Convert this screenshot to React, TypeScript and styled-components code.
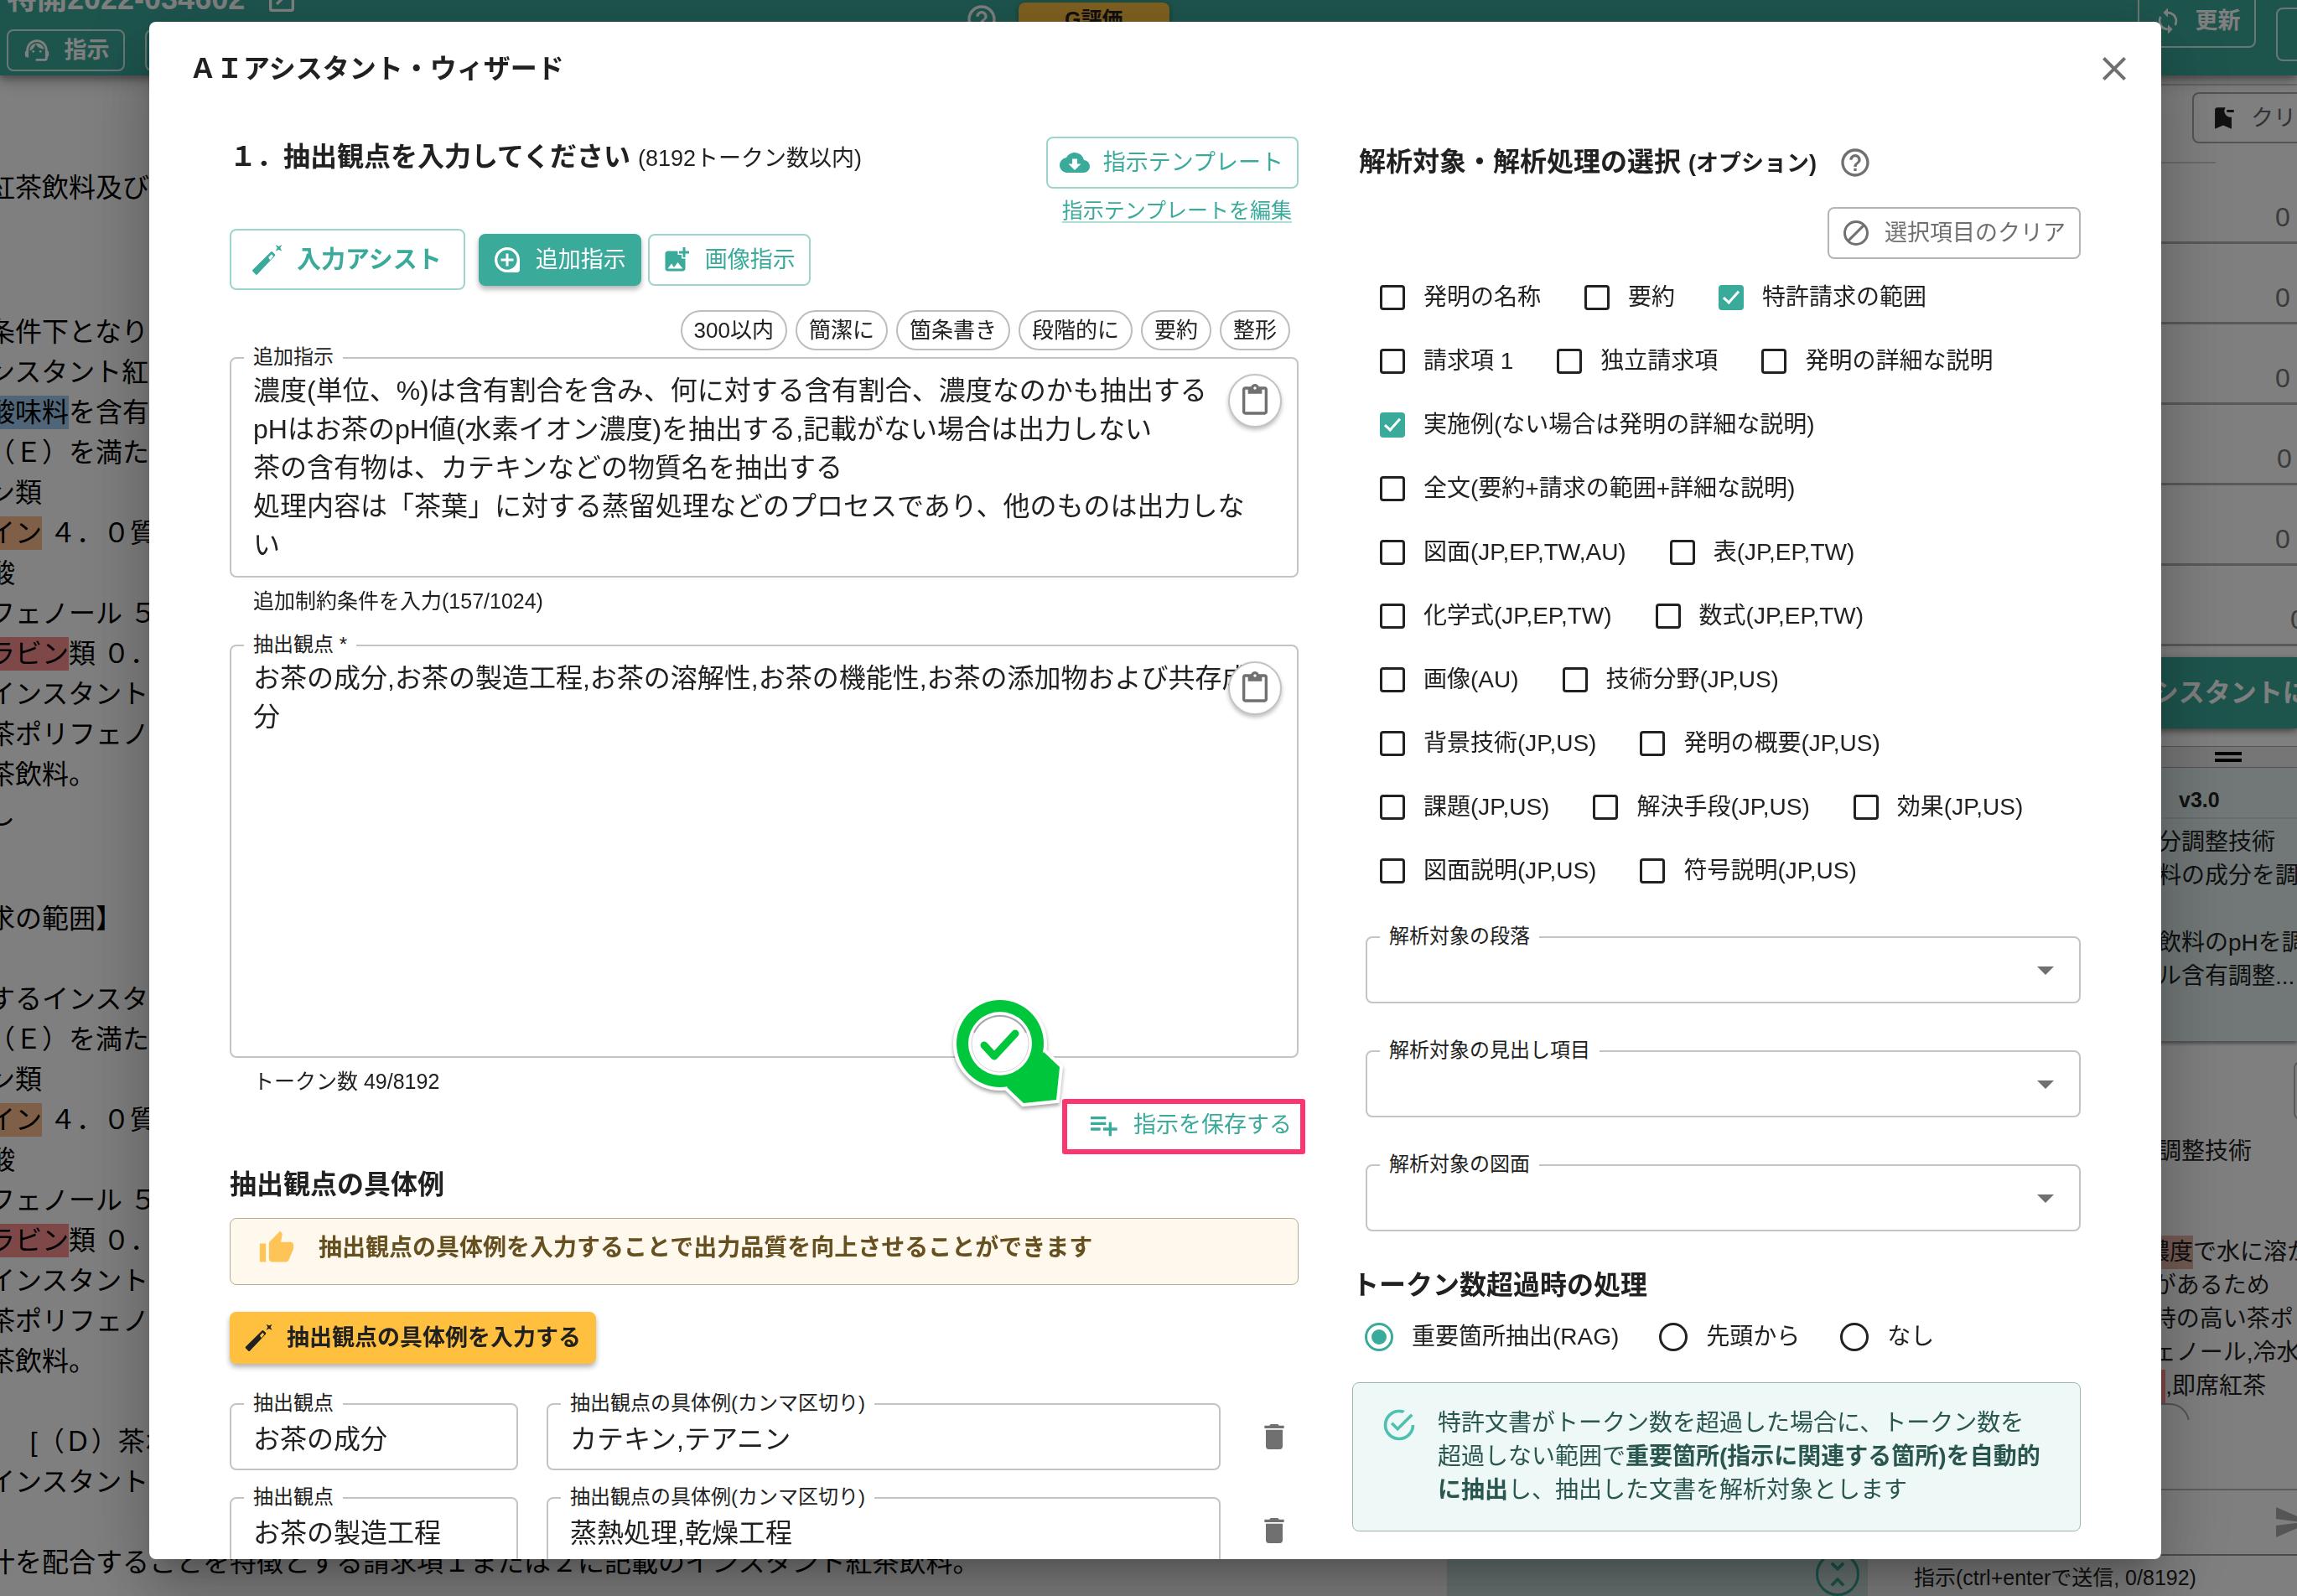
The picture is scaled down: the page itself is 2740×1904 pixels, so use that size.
import React, { useState } from 'react';
import styled, { createGlobalStyle, css } from 'styled-components';
import {
  MdAddPhotoAlternate,
  MdArrowDropDown,
  MdBookmarkRemove,
  MdClose,
  MdCloudDownload,
  MdContentPaste,
  MdDelete,
  MdHelpOutline,
  MdOpenInNew,
  MdPlaylistAdd,
  MdSend,
  MdSupportAgent,
  MdSync,
  MdThumbUp,
  MdUnfoldLess,
} from 'react-icons/md';

const teal = '#3aaa9b';
const amber = '#ffc040';
const ink = '#212121';
const line = '#c4c4c4';

const GlobalStyle = createGlobalStyle`
  *, *::before, *::after { box-sizing: border-box; }
  body {
    margin: 0;
    background: #fff;
    color: ${ink};
    font-family: "Liberation Sans", "Noto Sans CJK JP", sans-serif;
    font-size: 28px;
    line-height: 40px;
    text-spacing-trim: space-all;
  }
  button, input, textarea, select { font: inherit; color: inherit; }
  button { cursor: pointer; }
  h1, h2, p { margin: 0; }
  svg { display: block; flex: none; }
`;

/* ---------- page behind the dialog ---------- */

const Page = styled.div`
  height: 100vh;
  display: flex;
  flex-direction: column;
  overflow: hidden;
`;

const AppBar = styled.header`
  flex: none;
  display: flex;
  height: 90px;
  overflow: hidden;
  background: ${teal};
  color: #fff;
  position: relative;
  box-shadow: 0 4px 8px rgba(0, 0, 0, 0.3), 0 8px 20px rgba(0, 0, 0, 0.2);
`;

const BarLeft = styled.div`
  flex: 0 0 42%;
  display: flex;
  flex-direction: column;
  justify-content: flex-end;
  gap: 16px;
  padding: 0 8px 5px;
`;

const BarRow = styled.div`
  display: flex;
  align-items: center;
  gap: 24px;
`;

const DocNumber = styled.span`
  font-size: 36px;
  font-weight: 700;
`;

const BarButton = styled.button<{ $tall?: boolean }>`
  flex: none;
  display: flex;
  align-items: center;
  justify-content: center;
  gap: 16px;
  min-width: 141px;
  height: ${(p) => (p.$tall ? 64 : 50)}px;
  padding: 0 16px;
  border: 2px solid rgba(255, 255, 255, 0.8);
  border-radius: 8px;
  background: none;
  color: #fff;
  font-size: 27px;
  font-weight: 700;
  white-space: nowrap;
`;

const BarMiddle = styled.div`
  flex: 1;
  min-width: 0;
  display: flex;
  align-items: flex-start;
  gap: 24px;
  padding-top: 3px;
`;

const RatingButton = styled.button`
  width: 180px;
  height: 40px;
  padding: 0;
  border: 0;
  border-radius: 8px;
  background: ${amber};
  color: ${ink};
  font-size: 25px;
  line-height: 36px;
  font-weight: 700;
  box-shadow: 0 2px 6px rgba(0, 0, 0, 0.4);
`;

const BarRight = styled.div`
  flex: none;
  width: 190px;
  display: flex;
  align-items: flex-end;
  gap: 24px;
  padding-bottom: 17px;
`;

const BarLift = styled.div`
  flex: none;
  padding-bottom: 16px;
`;

const Workspace = styled.div`
  flex: 1;
  min-height: 0;
  display: flex;
`;

const Document = styled.article`
  flex: 1;
  min-width: 0;
  margin-left: -14px;
  padding-top: 110px;
  color: #000;
  font-size: 32px;
  line-height: 48px;
  white-space: pre;
`;

const Paragraph = styled.p`
  min-height: 48px;
  margin-bottom: 28px;
`;

const Mark = styled.mark<{ $tone: string }>`
  display: inline-block;
  height: 40px;
  line-height: 40px;
  color: inherit;
  background: ${(p) => p.$tone};
`;

const MiddlePane = styled.div`
  flex: 0 0 502px;
  display: flex;
  align-items: flex-end;
  justify-content: flex-end;
  padding: 0 10px 0 0;
  background: #d2e8e5;
`;

const RoundToggle = styled.button`
  display: grid;
  place-items: center;
  width: 52px;
  height: 52px;
  padding: 0;
  border: 3px solid ${teal};
  border-radius: 50%;
  background: none;
  color: ${teal};
`;

const SidePane = styled.aside`
  flex: 0 0 502px;
  display: flex;
  flex-direction: column;
  margin-left: 10px;
  padding-top: 10px;
  white-space: nowrap;
  overflow: hidden;
`;

const SideTools = styled.div`
  height: 95px;
  padding: 8px 0 0 377px;
  border-top: 2px solid #d0d0d0;
  background: linear-gradient(#d4d4d4, #d4d4d4) left bottom / 405px 2px no-repeat;
`;

const SideButton = styled.button`
  display: flex;
  align-items: center;
  gap: 16px;
  height: 61px;
  padding: 0 18px;
  border: 2px solid #a8a8a8;
  border-radius: 8px;
  background: none;
  color: #666;
  font-size: 27px;
  svg { color: ${ink}; }
`;

const CountRow = styled.div<{ $indent?: number }>`
  height: 96px;
  padding: 44px 0 0 ${(p) => 476 + (p.$indent ?? 0)}px;
  border-bottom: 3px solid #b4b4b4;
  color: #777;
  font-size: 32px;
`;

const AssistantBar = styled.button`
  height: 85px;
  margin: 13px 0 21px;
  padding: 0 0 0 300px;
  border: 0;
  background: ${teal};
  color: #fff;
  font-size: 31px;
  font-weight: 700;
  text-align: left;
  box-shadow: 0 3px 8px rgba(0, 0, 0, 0.5);
`;

const Splitter = styled.div`
  display: flex;
  flex-direction: column;
  justify-content: center;
  gap: 4px;
  height: 26px;
  padding-left: 404px;
  border-top: 1px solid #aaa;
  border-bottom: 1px solid #aaa;
  background: #ececec;
`;

const Grip = styled.span`
  width: 32px;
  height: 4px;
  background: #000;
`;

const AnswerCard = styled.section`
  height: 326px;
  background: #e2f1ef;
  box-shadow: 0 3px 4px rgba(0, 0, 0, 0.4);
`;

const Version = styled.div`
  height: 61px;
  padding: 18px 0 0 361px;
  border-bottom: 2px solid #cddedb;
  font-size: 25px;
  font-weight: 700;
`;

const SideLines = styled.div`
  padding: 8px 0 0 336px;
  white-space: pre;
`;

const SideNotesHead = styled.div`
  height: 112px;
  padding: 24px 0 0 498px;
`;

const SideMenuButton = styled.button`
  width: 72px;
  height: 70px;
  border: 2px solid #b4b4b4;
  border-radius: 8px;
  background: none;
`;

const SideNotes = styled.div`
  padding-left: 336px;
`;

const SideNotesLower = styled.div`
  padding: 80px 0 0 322px;
  white-space: pre;
`;

const SideTagClip = styled.div`
  height: 20px;
  padding-left: 300px;
  overflow: hidden;
`;

const SideTag = styled.button`
  width: 74px;
  height: 48px;
  border: 2px solid #a8a8a8;
  border-radius: 24px;
  background: none;
`;

const Composer = styled.div`
  margin-top: auto;
`;

const ComposerRow = styled.div`
  display: flex;
  align-items: center;
  height: 80px;
  padding-left: 473px;
  border-top: 2px solid #bbb;
  border-bottom: 2px solid #999;
  color: #aaa;
`;

const ComposerHint = styled.p`
  height: 48px;
  padding: 6px 0 0 45px;
  font-size: 25px;
`;

/* ---------- dialog ---------- */

const Backdrop = styled.div`
  position: fixed;
  inset: 0;
  display: flex;
  padding: 26px 162px 44px 178px;
  background: rgba(0, 0, 0, 0.5);
`;

const Dialog = styled.div`
  flex: 1;
  min-width: 0;
  display: flex;
  flex-direction: column;
  overflow: hidden;
  border-radius: 8px;
  background: #fff;
  box-shadow: 0 22px 30px -14px rgba(0, 0, 0, 0.2), 0 48px 76px 6px rgba(0, 0, 0, 0.14),
    0 18px 92px 16px rgba(0, 0, 0, 0.12);
`;

const DialogHead = styled.div`
  flex: none;
  display: flex;
  align-items: center;
  justify-content: space-between;
  height: 112px;
  padding: 0 32px 0 48px;
`;

const DialogTitle = styled.h1`
  font-size: 32px;
  line-height: 48px;
`;

const PlainIconButton = styled.button`
  display: grid;
  place-items: center;
  padding: 0;
  border: 0;
  background: none;
  color: #707070;
`;

const DialogBody = styled.div`
  flex: 1;
  min-height: 0;
  display: grid;
  grid-template-columns: minmax(0, 1275fr) minmax(0, 869fr);
  column-gap: 64px;
  padding: 25px 96px 0;
  overflow: auto;
  scrollbar-width: none;
`;

const Column = styled.div`
  min-width: 0;
`;

const SectionHead = styled.div`
  display: flex;
  justify-content: space-between;
  align-items: flex-start;
`;

const Heading = styled.h2<{ $spaced?: boolean }>`
  margin-top: ${(p) => (p.$spaced ? 12 : 0)}px;
  font-size: 32px;
  line-height: 48px;
  small { font-size: 27px; }
`;

const Light = styled.small`
  font-weight: 400;
`;

const TemplateBox = styled.div`
  display: flex;
  flex-direction: column;
  align-items: flex-end;
  gap: 8px;
`;

const TemplateLink = styled.a`
  margin-right: 8px;
  color: ${teal};
  font-size: 25px;
  line-height: 36px;
  text-decoration-color: rgba(58, 170, 155, 0.4);
  text-decoration-thickness: 2px;
  text-underline-offset: 4px;
`;

type Tone = 'outline' | 'solid' | 'amber' | 'grey' | 'text';

const tones = {
  outline: css`border-color: #9dd4cd; background: #fff; color: ${teal};`,
  solid: css`border-color: ${teal}; background: ${teal}; color: #fff; box-shadow: 0 4px 6px rgba(0, 0, 0, 0.3);`,
  amber: css`border-color: ${amber}; background: ${amber}; color: ${ink}; box-shadow: 0 4px 6px rgba(0, 0, 0, 0.3);`,
  grey: css`border-color: #b4b4b4; background: #fff; color: #707070;`,
  text: css`border-color: transparent; background: none; color: ${teal};`,
};

const Button = styled.button<{ $tone: Tone; $large?: boolean; $strong?: boolean }>`
  display: inline-flex;
  align-items: center;
  justify-content: center;
  gap: 16px;
  height: ${(p) => (p.$large ? 73 : 62)}px;
  padding: ${(p) => (p.$large ? '0 26px 0 22px' : '0 16px 0 14px')};
  border: 2px solid;
  border-radius: 8px;
  font-size: ${(p) => (p.$large ? 29 : 27)}px;
  font-weight: ${(p) => (p.$strong ? 700 : 400)};
  white-space: nowrap;
  ${(p) => tones[p.$tone]}
`;

const ActionRow = styled.div`
  display: flex;
  align-items: center;
  gap: 8px;
  margin-top: 4px;
  & > :first-child { margin-right: 8px; }
`;

const ChipRow = styled.div`
  display: flex;
  justify-content: flex-end;
  gap: 10px;
  margin: 24px 10px 8px 0;
`;

const Chip = styled.button`
  height: 48px;
  padding: 0 14px;
  border: 2px solid #bdbdbd;
  border-radius: 24px;
  background: #fff;
  font-size: 26px;
  line-height: 40px;
`;

const Field = styled.div`
  position: relative;
`;

const FieldLabel = styled.label`
  position: absolute;
  top: -16px;
  left: 17px;
  padding: 0 11px;
  background: #fff;
  font-size: 24px;
  line-height: 32px;
`;

const controlBox = css`
  display: block;
  width: 100%;
  margin: 0;
  border: 2px solid ${line};
  border-radius: 8px;
  background: #fff;
  font-size: 32px;
  outline: 0;
`;

const TextArea = styled.textarea`
  ${controlBox}
  padding: 15px 40px 14px 26px;
  line-height: 46px;
  resize: none;
  overflow: hidden;
`;

const TextInput = styled.input`
  ${controlBox}
  height: 80px;
  padding: 0 26px;
`;

const Select = styled.select`
  ${controlBox}
  height: 80px;
  padding: 0 72px 0 26px;
  appearance: none;
`;

const SelectArrow = styled(MdArrowDropDown)`
  position: absolute;
  top: 16px;
  right: 18px;
  color: #707070;
  pointer-events: none;
`;

const PasteButton = styled.button`
  position: absolute;
  top: 20px;
  right: 20px;
  display: grid;
  place-items: center;
  width: 64px;
  height: 64px;
  padding: 0;
  border: 2px solid ${line};
  border-radius: 50%;
  background: #fff;
  color: #707070;
  box-shadow: 0 3px 5px rgba(0, 0, 0, 0.25);
`;

const Helper = styled.p<{ $last?: boolean }>`
  margin: 11px 0 ${(p) => (p.$last ? 4 : 35)}px;
  padding-left: 28px;
  font-size: 25px;
  line-height: 34px;
`;

const SaveRow = styled.div`
  display: flex;
  justify-content: flex-end;
  margin-right: -8px;
`;

const Callout = styled.div`
  position: relative;
  border: 6px solid #fb3570;
  border-radius: 3px;
  width: 290px;
  height: 66px;
  padding-bottom: 4px;
  display: flex;
  align-items: center;
  justify-content: flex-end;
  & > button { padding: 0 8px; }
`;

const Pin = styled.svg`
  position: absolute;
  right: 280px;
  bottom: 50px;
  filter: drop-shadow(0 3px 2px rgba(0, 0, 0, 0.35));
`;

const Notice = styled.div<{ $kind: 'tip' | 'info' }>`
  display: flex;
  border: 1px solid;
  border-radius: 8px;
  ${(p) =>
    p.$kind === 'tip'
      ? css`
          align-items: center;
          gap: 28px;
          height: 80px;
          margin: 16px 0 32px;
          padding: 0 32px 8px 33px;
          border-color: #b8ab93;
          background: #fff8ed;
          color: #66501f;
          font-weight: 700;
          svg { color: #ffc457; }
        `
      : css`
          gap: 24px;
          margin-top: 16px;
          padding: 28px 40px 28px 33px;
          border-color: #9fb5b1;
          background: #eef8f7;
          color: #2a5650;
          svg { color: #4fbfb0; }
        `}
`;

const ExampleList = styled.div`
  display: grid;
  gap: 32px;
  margin-top: 47px;
`;

const ExampleRow = styled.div`
  display: grid;
  grid-template-columns: minmax(0, 344fr) minmax(0, 804fr) 59px;
  column-gap: 34px;
  align-items: center;
`;

const HelpHeading = styled.div`
  display: flex;
  align-items: center;
  gap: 26px;
  padding: 6px 0 0 8px;
`;

const ClearRow = styled.div`
  display: flex;
  justify-content: flex-end;
  margin: 28px 0 8px;
`;

const OptionRow = styled.div`
  display: flex;
  align-items: center;
  gap: 52px;
  height: 76px;
  padding-left: 33px;
`;

const RadioRow = styled(OptionRow)`
  gap: 48px;
  padding-left: 15px;
`;

const OptionLabel = styled.label`
  display: flex;
  align-items: center;
  gap: 22px;
  white-space: nowrap;
`;

const Checkbox = styled.input`
  appearance: none;
  display: grid;
  place-items: center;
  width: 30px;
  height: 30px;
  margin: 0;
  border: 3px solid ${ink};
  border-radius: 4px;
  &:checked {
    border-color: ${teal};
    background: ${teal};
  }
  &:checked::after {
    content: '';
    width: 10px;
    height: 19px;
    margin-top: -6px;
    border: solid #fff;
    border-width: 0 3px 3px 0;
    transform: rotate(42deg);
  }
`;

const Radio = styled.input`
  appearance: none;
  display: grid;
  place-items: center;
  width: 34px;
  height: 34px;
  margin: 0;
  border: 3px solid ${ink};
  border-radius: 50%;
  &:checked { border-color: ${teal}; }
  &:checked::after {
    content: '';
    width: 18px;
    height: 18px;
    border-radius: 50%;
    background: ${teal};
  }
`;

const SelectStack = styled.div`
  display: grid;
  gap: 56px;
  margin: 40px 0;
  padding-left: 16px;
`;

/* ---------- icons ---------- */

const WandIcon = ({ size }: { size: number }) => (
  <svg width={size} height={size} viewBox="0 0 24 24" fill="currentColor" aria-hidden="true">
    <path
      fillRule="evenodd"
      d="M16.3 6.3l1.6 1.6a.9.9 0 0 1 0 1.3L5.4 22.3a.9.9 0 0 1-1.3 0l-2-2a.9.9 0 0 1 0-1.3L15 6.3a.9.9 0 0 1 1.3 0zM15.6 7.9l-2.3 2.3 1.2 2 2.3-2.8z"
    />
    <path d="M18.4 1.2l2.3 1.2 2.3-1.2-1.2 2.3L23 5.8l-2.3-1.2-2.3 1.2 1.2-2.3z" />
  </svg>
);

const AddNoteIcon = () => (
  <svg width="36" height="36" viewBox="0 0 24 24" fill="currentColor" aria-hidden="true">
    <path
      fillRule="evenodd"
      d="M12 2C6.48 2 2 6.48 2 12s4.48 10 10 10h8c1.1 0 2-.9 2-2v-8c0-5.52-4.48-10-10-10zm0 2.2a7.8 7.8 0 1 1 0 15.6 7.8 7.8 0 0 1 0-15.6zM11 7v4H7v2h4v4h2v-4h4v-2h-4V7z"
    />
  </svg>
);

const ClearIcon = () => (
  <svg width="36" height="36" viewBox="0 0 24 24" fill="none" stroke="currentColor" strokeWidth="2" aria-hidden="true">
    <circle cx="12" cy="12" r="9" />
    <path d="M5.6 18.4L18.4 5.6" />
  </svg>
);

const SuccessIcon = () => (
  <svg width="44" height="44" viewBox="0 0 24 24" fill="currentColor" aria-hidden="true">
    <path d="M20,12A8,8 0 0,1 12,20A8,8 0 0,1 4,12A8,8 0 0,1 12,4C12.76,4 13.5,4.11 14.2,4.31L15.77,2.74C14.61,2.26 13.34,2 12,2A10,10 0 0,0 2,12A10,10 0 0,0 12,22A10,10 0 0,0 22,12M7.91,10.08L6.5,11.5L11,16L21,6L19.59,4.58L11,13.17L7.91,10.08Z" />
  </svg>
);

const CheckPin = () => (
  <Pin width="136" height="132" viewBox="0 0 136 132" aria-hidden="true">
    <g stroke="#fff" strokeWidth="8" strokeLinejoin="miter" fill="#fff">
      <circle cx="58" cy="56" r="52" />
      <path d="M110 66L129 84L125 123L86 127L66 108Z" />
    </g>
    <circle cx="58" cy="56" r="52" fill="#00c63c" />
    <path d="M110 66L129 84L125 123L86 127L66 108Z" fill="#00c63c" />
    <circle cx="58" cy="56" r="38" fill="#fff" />
    <circle cx="58" cy="56" r="34" fill="none" stroke="#d4d4d4" strokeWidth="1" />
    <path d="M27 43A34 34 0 0 1 89 43" fill="none" stroke="#a8a8a8" strokeWidth="2" />
    <path d="M39 58L51 71L76 44" fill="none" stroke="#00c63c" strokeWidth="9" strokeLinecap="round" strokeLinejoin="round" />
  </Pin>
);

/* ---------- content ---------- */

const chips = ['300以内', '簡潔に', '箇条書き', '段階的に', '要約', '整形'];

const optionRows = [
  ['発明の名称', '要約', '特許請求の範囲'],
  ['請求項 1', '独立請求項', '発明の詳細な説明'],
  ['実施例(ない場合は発明の詳細な説明)'],
  ['全文(要約+請求の範囲+詳細な説明)'],
  ['図面(JP,EP,TW,AU)', '表(JP,EP,TW)'],
  ['化学式(JP,EP,TW)', '数式(JP,EP,TW)'],
  ['画像(AU)', '技術分野(JP,US)'],
  ['背景技術(JP,US)', '発明の概要(JP,US)'],
  ['課題(JP,US)', '解決手段(JP,US)', '効果(JP,US)'],
  ['図面説明(JP,US)', '符号説明(JP,US)'],
];

const preset = ['特許請求の範囲', '実施例(ない場合は発明の詳細な説明)'];
const selects = ['解析対象の段落', '解析対象の見出し項目', '解析対象の図面'];
const overflowModes = ['重要箇所抽出(RAG)', '先頭から', 'なし'];

const examples = [
  { point: 'お茶の成分', detail: 'カテキン,テアニン' },
  { point: 'お茶の製造工程', detail: '蒸熱処理,乾燥工程' },
];

const ClaimLines = () => (
  <>
    {'（Ｅ）を満た\nン類\n'}
    <Mark $tone="#ffbf8f">イン</Mark>
    {' ４．０質\n酸\nフェノール ５\n'}
    <Mark $tone="#ff9090">ラビン</Mark>
    {'類 ０．\nインスタント\n茶ポリフェノ\n茶飲料。\n'}
  </>
);

const Background = () => (
  <Page>
    <AppBar>
      <BarLeft>
        <BarRow>
          <DocNumber>特開2022-034602</DocNumber>
          <MdOpenInNew size={40} />
        </BarRow>
        <BarRow>
          <BarButton type="button"><MdSupportAgent size={34} />指示</BarButton>
          <BarButton type="button">要約</BarButton>
        </BarRow>
      </BarLeft>
      <BarMiddle>
        <MdHelpOutline size={40} />
        <RatingButton type="button">G評価</RatingButton>
      </BarMiddle>
      <BarRight>
        <BarLift>
          <BarButton type="button" $tall><MdSync size={34} />更新</BarButton>
        </BarLift>
        <BarButton type="button" $tall>拡大</BarButton>
      </BarRight>
    </AppBar>
    <Workspace>
      <Document>
        <Paragraph>{'紅茶飲料及び\n\n '}</Paragraph>
        <Paragraph>
          {'条件下となり\nンスタント紅\n'}
          <Mark $tone="#a0cdf0">酸味料</Mark>
          {'を含有\n'}
          <ClaimLines />
          {'し\n '}
        </Paragraph>
        <Paragraph>
          {'求の範囲】\n\nするインスタ\n'}
          <ClaimLines />
          {'\n　  [（Ｄ）茶ポ\nインスタント\n\n汁を配合することを特徴とする請求項１または２に記載のインスタント紅茶飲料。'}
        </Paragraph>
      </Document>
      <MiddlePane>
        <RoundToggle type="button" aria-label="折りたたむ"><MdUnfoldLess size={44} /></RoundToggle>
      </MiddlePane>
      <SidePane>
        <SideTools>
          <SideButton type="button"><MdBookmarkRemove size={34} />クリア</SideButton>
        </SideTools>
        <div>
          {[0, 0, 0, 2, 0, 18].map((indent, i) => (
            <CountRow key={i} $indent={indent}>0</CountRow>
          ))}
        </div>
        <AssistantBar type="button">アシスタントに</AssistantBar>
        <Splitter><Grip /><Grip /></Splitter>
        <AnswerCard>
          <Version>v3.0</Version>
          <SideLines>{'分調整技術\n料の成分を調整\n\n飲料のpHを調整\nル含有調整...'}</SideLines>
        </AnswerCard>
        <SideNotesHead><SideMenuButton type="button" aria-label="メニュー" /></SideNotesHead>
        <SideNotes>調整技術</SideNotes>
        <SideNotesLower>
          <Mark $tone="#e8b4a8">濃度</Mark>
          {'で水に溶かす\n があるため\n 時の高い茶ポリ\n ェノール,冷水\n  '}
          <Mark $tone="#ff9090"> </Mark>
          {',即席紅茶'}
        </SideNotesLower>
        <SideTagClip><SideTag type="button" aria-label="タグ" /></SideTagClip>
        <Composer>
          <ComposerRow><MdSend size={48} /></ComposerRow>
          <ComposerHint>指示(ctrl+enterで送信, 0/8192)</ComposerHint>
        </Composer>
      </SidePane>
    </Workspace>
  </Page>
);

export default function App() {
  const [checked, setChecked] = useState<string[]>(preset);
  const [mode, setMode] = useState(overflowModes[0]);

  const toggle = (name: string) =>
    setChecked((now) => (now.includes(name) ? now.filter((n) => n !== name) : [...now, name]));

  return (
    <>
      <GlobalStyle />
      <Background />
      <Backdrop>
        <Dialog role="dialog" aria-modal="true" aria-labelledby="wizard-title">
          <DialogHead>
            <DialogTitle id="wizard-title">ＡＩアシスタント・ウィザード</DialogTitle>
            <PlainIconButton type="button" aria-label="閉じる"><MdClose size={48} /></PlainIconButton>
          </DialogHead>
          <DialogBody>
            <Column>
              <SectionHead>
                <Heading>１．抽出観点を入力してください <Light>(8192トークン数以内)</Light></Heading>
                <TemplateBox>
                  <Button type="button" $tone="outline"><MdCloudDownload size={36} />指示テンプレート</Button>
                  <TemplateLink href="#templates">指示テンプレートを編集</TemplateLink>
                </TemplateBox>
              </SectionHead>
              <ActionRow>
                <Button type="button" $tone="outline" $large $strong><WandIcon size={40} />入力アシスト</Button>
                <Button type="button" $tone="solid"><AddNoteIcon />追加指示</Button>
                <Button type="button" $tone="outline"><MdAddPhotoAlternate size={36} />画像指示</Button>
              </ActionRow>
              <ChipRow>
                {chips.map((chip) => <Chip type="button" key={chip}>{chip}</Chip>)}
              </ChipRow>
              <Field>
                <TextArea
                  id="extra"
                  rows={5}
                  defaultValue={
                    '濃度(単位、%)は含有割合を含み、何に対する含有割合、濃度なのかも抽出する\npHはお茶のpH値(水素イオン濃度)を抽出する,記載がない場合は出力しない\n茶の含有物は、カテキンなどの物質名を抽出する\n処理内容は「茶葉」に対する蒸留処理などのプロセスであり、他のものは出力しない'
                  }
                />
                <FieldLabel htmlFor="extra">追加指示</FieldLabel>
                <PasteButton type="button" aria-label="貼り付け"><MdContentPaste size={40} /></PasteButton>
              </Field>
              <Helper>追加制約条件を入力(157/1024)</Helper>
              <Field>
                <TextArea
                  id="points"
                  rows={10}
                  defaultValue="お茶の成分,お茶の製造工程,お茶の溶解性,お茶の機能性,お茶の添加物および共存成分"
                />
                <FieldLabel htmlFor="points">抽出観点 *</FieldLabel>
                <PasteButton type="button" aria-label="貼り付け"><MdContentPaste size={40} /></PasteButton>
              </Field>
              <Helper $last>トークン数 49/8192</Helper>
              <SaveRow>
                <Callout>
                  <Button type="button" $tone="text"><MdPlaylistAdd size={40} />指示を保存する</Button>
                  <CheckPin />
                </Callout>
              </SaveRow>
              <Heading $spaced>抽出観点の具体例</Heading>
              <Notice $kind="tip">
                <MdThumbUp size={44} />
                抽出観点の具体例を入力することで出力品質を向上させることができます
              </Notice>
              <Button type="button" $tone="amber" $strong><WandIcon size={36} />抽出観点の具体例を入力する</Button>
              <ExampleList>
                {examples.map((row, i) => (
                  <ExampleRow key={row.point}>
                    <Field>
                      <TextInput id={`point-${i}`} defaultValue={row.point} />
                      <FieldLabel htmlFor={`point-${i}`}>抽出観点</FieldLabel>
                    </Field>
                    <Field>
                      <TextInput id={`detail-${i}`} defaultValue={row.detail} />
                      <FieldLabel htmlFor={`detail-${i}`}>抽出観点の具体例(カンマ区切り)</FieldLabel>
                    </Field>
                    <PlainIconButton type="button" aria-label="削除"><MdDelete size={40} /></PlainIconButton>
                  </ExampleRow>
                ))}
              </ExampleList>
            </Column>
            <Column>
              <HelpHeading>
                <Heading>解析対象・解析処理の選択 <small>(オプション)</small></Heading>
                <PlainIconButton type="button" aria-label="ヘルプ"><MdHelpOutline size={40} /></PlainIconButton>
              </HelpHeading>
              <ClearRow>
                <Button type="button" $tone="grey"><ClearIcon />選択項目のクリア</Button>
              </ClearRow>
              {optionRows.map((row) => (
                <OptionRow key={row[0]}>
                  {row.map((name) => (
                    <OptionLabel key={name}>
                      <Checkbox type="checkbox" checked={checked.includes(name)} onChange={() => toggle(name)} />
                      {name}
                    </OptionLabel>
                  ))}
                </OptionRow>
              ))}
              <SelectStack>
                {selects.map((name, i) => (
                  <Field key={name}>
                    <Select id={`target-${i}`}><option value="" /></Select>
                    <FieldLabel htmlFor={`target-${i}`}>{name}</FieldLabel>
                    <SelectArrow size={48} />
                  </Field>
                ))}
              </SelectStack>
              <Heading>トークン数超過時の処理</Heading>
              <RadioRow role="radiogroup">
                {overflowModes.map((name) => (
                  <OptionLabel key={name}>
                    <Radio type="radio" name="overflow" checked={mode === name} onChange={() => setMode(name)} />
                    {name}
                  </OptionLabel>
                ))}
              </RadioRow>
              <Notice $kind="info">
                <SuccessIcon />
                <p>
                  特許文書がトークン数を超過した場合に、トークン数を超過しない範囲で
                  <strong>重要箇所(指示に関連する箇所)を自動的に抽出</strong>
                  し、抽出した文書を解析対象とします
                </p>
              </Notice>
            </Column>
          </DialogBody>
        </Dialog>
      </Backdrop>
    </>
  );
}
